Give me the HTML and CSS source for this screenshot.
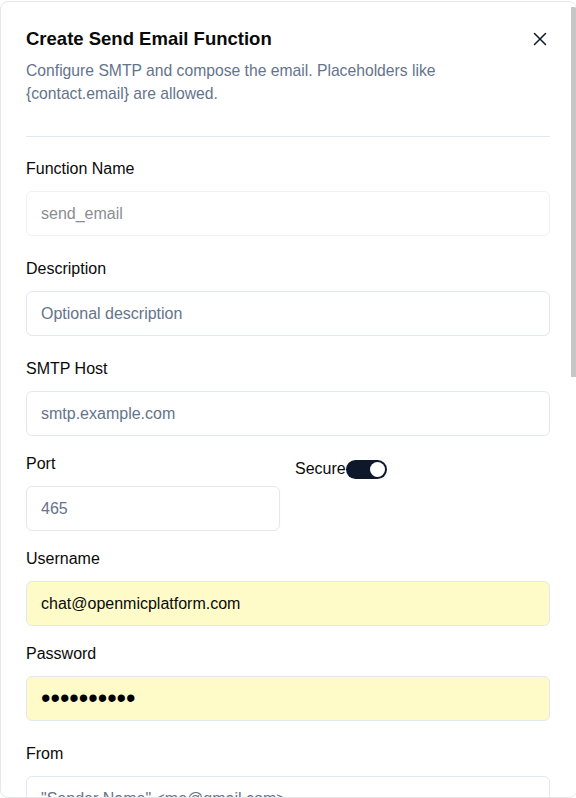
FILE: index.html
```html
<!DOCTYPE html>
<html lang="en">
<head>
<meta charset="utf-8">
<title>Create Send Email Function</title>
<link rel="stylesheet" href="styles.css">
</head>
<body>
<div class="dialog" role="dialog" aria-labelledby="dlg-title">
  <div class="scroll-area">
    <header class="dialog-header">
      <div class="title-row">
        <h2 id="dlg-title" class="dialog-title">Create Send Email Function</h2>
        <button class="close-btn" type="button" aria-label="Close">
          <svg width="16" height="16" viewBox="0 0 16 16" fill="none" stroke="currentColor" stroke-width="1.5" stroke-linecap="round">
            <path d="M2.5 2.5l11 11M13.5 2.5l-11 11"/>
          </svg>
        </button>
      </div>
      <p class="dialog-desc">Configure SMTP and compose the email. Placeholders like {contact.email} are allowed.</p>
    </header>

    <form class="form">
      <div class="field">
        <label class="label" for="fn">Function Name</label>
        <input class="input input-muted" id="fn" type="text" placeholder="send_email">
      </div>
      <div class="field">
        <label class="label" for="desc">Description</label>
        <input class="input" id="desc" type="text" placeholder="Optional description">
      </div>

      <div class="group">
        <div class="field">
          <label class="label" for="host">SMTP Host</label>
          <input class="input" id="host" type="text" placeholder="smtp.example.com">
        </div>
        <div class="row-2">
          <div class="field">
            <label class="label" for="port">Port</label>
            <input class="input" id="port" type="text" placeholder="465">
          </div>
          <div class="secure">
            <span class="secure-label">Secure</span>
            <span class="switch" role="switch" aria-checked="true"><span class="switch-thumb"></span></span>
          </div>
        </div>
        <div class="field">
          <label class="label" for="user">Username</label>
          <input class="input input-autofill" id="user" type="text" value="chat@openmicplatform.com">
        </div>
        <div class="field">
          <label class="label" for="pass">Password</label>
          <input class="input input-autofill input-password" id="pass" type="password" value="abcdefghij">
        </div>
      </div>

      <div class="field">
        <label class="label" for="from">From</label>
        <input class="input" id="from" type="text" placeholder="&quot;Sender Name&quot; &lt;me@gmail.com&gt;">
      </div>
      <div class="field">
        <label class="label" for="to">To</label>
        <input class="input" id="to" type="text" placeholder="{contact.email}">
      </div>
      <div class="field">
        <label class="label" for="subj">Subject</label>
        <input class="input" id="subj" type="text" placeholder="Hello {contact.name}">
      </div>
      <div class="field">
        <label class="label" for="body">Text Body</label>
        <textarea class="input textarea" id="body" placeholder="Plain text body"></textarea>
      </div>
      <div class="field">
        <label class="label" for="html">HTML Body</label>
        <textarea class="input textarea" id="html" placeholder="Optional HTML body"></textarea>
      </div>

      <div class="footer">
        <button class="btn btn-outline" type="button">Cancel</button>
        <button class="btn btn-primary" type="button">Create</button>
      </div>
    </form>
  </div>
  <div class="scrollbar" aria-hidden="true"><div class="scrollbar-thumb"></div></div>
</div>
</body>
</html>
```

FILE: styles.css
```css
* { box-sizing: border-box; }

html, body {
  margin: 0;
  padding: 0;
  background: #ffffff;
  overflow: hidden;
  font-family: "Liberation Sans", Arial, sans-serif;
  color: #0a0a0a;
}

.dialog {
  display: flex;
  margin-top: 1px;
  height: 797px;
  width: 577px;
  border: 1px solid #e5e7eb;
  border-radius: 8px;
  overflow: hidden;
  background: #ffffff;
}

.scroll-area {
  flex: 1;
  min-width: 0;
  overflow: hidden;
  padding: 0 21px 24px 25px;
}

.scrollbar {
  flex: none;
  width: 5px;
  background: #ffffff;
}

.scrollbar-thumb {
  margin-top: 5px;
  height: 370px;
  background: #c6c6c6;
}

.dialog-header {
  padding-top: 25px;
  padding-bottom: 31px;
  border-bottom: 1px solid #e2e8f0;
}

.title-row {
  display: flex;
  align-items: center;
  justify-content: space-between;
}

.dialog-title {
  margin: 0;
  font-size: 18.5px;
  line-height: 24px;
  font-weight: 700;
  color: #0a0a0a;
}

.close-btn {
  display: flex;
  align-items: center;
  justify-content: center;
  width: 16px;
  height: 16px;
  margin-right: 2px;
  padding: 0;
  border: 0;
  background: none;
  color: #0f172a;
  cursor: pointer;
}

.dialog-desc {
  max-width: 500px;
  margin: 8px 0 0;
  font-size: 15.7px;
  line-height: 23px;
  color: #64748b;
}

.form {
  display: flex;
  flex-direction: column;
  gap: 22px;
  padding-top: 21px;
}

.group {
  display: flex;
  flex-direction: column;
  gap: 17px;
}

.field {
  display: flex;
  flex-direction: column;
  gap: 11px;
}

.label {
  font-size: 16px;
  line-height: 22px;
  color: #0a0a0a;
}

.input {
  height: 45px;
  width: 100%;
  border: 1px solid #e2e8f0;
  border-radius: 6px;
  padding: 0 14px;
  font-family: inherit;
  font-size: 16px;
  color: #0a0a0a;
  background: #ffffff;
  outline: none;
}

.input::placeholder { color: #64748b; }

.input-muted { border-color: #edf0f4; }
.input-muted::placeholder { color: #8a8d93; }

.input-autofill { background: #fefbc8; }

.input-password {
  font-size: 27px;
  color: #000000;
}

.textarea {
  height: 160px;
  padding-top: 12px;
  resize: none;
}

.row-2 {
  display: grid;
  grid-template-columns: 1fr 1fr;
  gap: 16px;
}

.secure {
  display: flex;
  align-items: center;
  height: 32px;
  margin-left: -1px;
}

.secure-label {
  font-size: 16px;
  line-height: 20px;
  color: #0a0a0a;
}

.switch {
  display: flex;
  align-items: center;
  justify-content: flex-end;
  width: 41px;
  height: 19px;
  padding: 0 2px;
  border-radius: 10px;
  background: #0f172a;
}

.switch-thumb {
  width: 15px;
  height: 15px;
  border-radius: 50%;
  background: #ffffff;
}

.footer {
  display: flex;
  justify-content: flex-end;
  gap: 8px;
  padding-top: 4px;
}

.btn {
  height: 40px;
  padding: 0 16px;
  border-radius: 6px;
  font-family: inherit;
  font-size: 14px;
  cursor: pointer;
}

.btn-outline {
  border: 1px solid #e2e8f0;
  background: #ffffff;
  color: #0f172a;
}

.btn-primary {
  border: 1px solid #0f172a;
  background: #0f172a;
  color: #ffffff;
}
```
